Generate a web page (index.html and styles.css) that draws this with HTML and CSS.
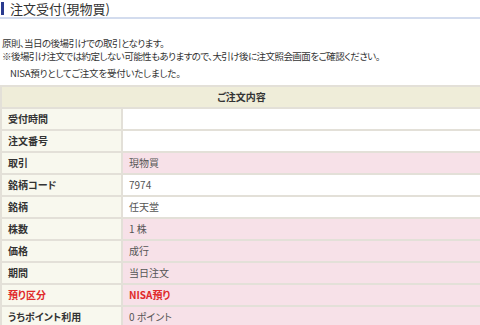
FILE: index.html
```html
<!DOCTYPE html>
<html lang="ja">
<head>
    <meta charset="UTF-8">
    <meta name="viewport" content="width=device-width, initial-scale=1.0">
    <title>注文受付(現物買)</title>
    <link rel="stylesheet" href="styles.css">
</head>
<body>
    <div class="title-bar">
        <h1 class="page-title">注文受付(現物買)</h1>
    </div>

    <div class="notes">
        <p>原則、当日の後場引けでの取引となります。</p>
        <p>※後場引け注文では約定しない可能性もありますので、大引け後に注文照会画面をご確認ください。</p>
        <p class="done-msg">NISA預りとしてご注文を受付いたしました。</p>
    </div>

    <table class="order-table">
        <tr>
            <th colspan="2" class="table-head">ご注文内容</th>
        </tr>
        <tr>
            <th>受付時間</th>
            <td></td>
        </tr>
        <tr>
            <th>注文番号</th>
            <td></td>
        </tr>
        <tr>
            <th>取引</th>
            <td class="pink">現物買</td>
        </tr>
        <tr>
            <th>銘柄コード</th>
            <td>7974</td>
        </tr>
        <tr>
            <th>銘柄</th>
            <td>任天堂</td>
        </tr>
        <tr>
            <th>株数</th>
            <td class="pink">1 株</td>
        </tr>
        <tr>
            <th>価格</th>
            <td class="pink">成行</td>
        </tr>
        <tr>
            <th>期間</th>
            <td class="pink">当日注文</td>
        </tr>
        <tr>
            <th class="red">預り区分</th>
            <td class="pink red-bold">NISA預り</td>
        </tr>
        <tr>
            <th>うちポイント利用</th>
            <td class="pink">0 ポイント</td>
        </tr>
    </table>
</body>
</html>
```

FILE: styles.css
```css
body {
    margin: 0;
    padding: 0;
    background-color: #fff;
    color: #333;
    font-family: "Noto Sans CJK JP", sans-serif;
    font-size: 10px;
    font-feature-settings: "palt";
    overflow: hidden;
}

.title-bar {
    height: 16px;
    padding-top: 1px;
    border-bottom: 2px solid #d3dcee;
}
.page-title {
    margin: 1px 0 0 1px;
    padding-left: 6px;
    border-left: 3px solid #2a3b8f;
    font-size: 13px;
    font-weight: normal;
    line-height: 13px;
    color: #333;
}

.notes {
    padding: 18px 0 0 2px;
    font-size: 9.5px;
    letter-spacing: -0.55px;
}
.notes p {
    margin: 0;
    line-height: 13px;
}
.notes .done-msg {
    margin-top: 4px;
    padding-left: 8px;
    letter-spacing: -0.2px;
}

.order-table {
    margin-top: 5px;
    width: 483px;
    border-collapse: collapse;
    border: 2px solid #e3e0d8;
}
.order-table th,
.order-table td {
    height: 20px;
    padding: 0 6px;
    border: 2px solid #e3e0d8;
    text-align: left;
    line-height: 12px;
}
.order-table th {
    width: 107px;
    background-color: #f8f8ee;
    font-weight: bold;
    color: #333;
}
.order-table td {
    background-color: #fff;
    color: #555;
}
.order-table .table-head {
    width: auto;
    background-color: #efedd9;
    text-align: center;
}
.order-table .pink {
    background-color: #f7e1e8;
}
.order-table .red {
    color: #e02a2a;
}
.order-table .red-bold {
    color: #e02a2a;
    font-weight: bold;
}
```
